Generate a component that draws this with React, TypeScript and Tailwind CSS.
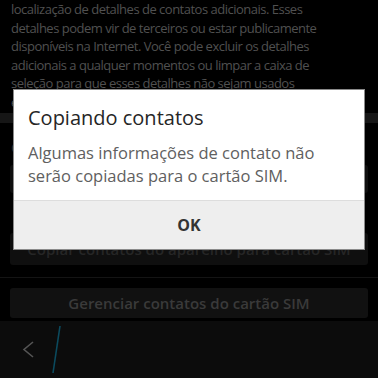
const FONT = { fontFamily: '"Open Sans", "Noto Sans", sans-serif' };

const LINES = [
  'localização de detalhes de contatos adicionais. Esses',
  'detalhes podem vir de terceiros ou estar publicamente',
  'disponíveis na Internet. Você pode excluir os detalhes',
  'adicionais a qualquer momentos ou limpar a caixa de',
  'seleção para que esses detalhes não sejam usados',
  'em seus contatos.',
];

const BackBar = () => (
  <div className="h-[57px] bg-[#0c0c0c] flex items-center">
    <svg width="70" height="57" viewBox="0 0 70 57">
      <path d="M33 21 L24 28.5 L33 36" fill="none" stroke="#555" strokeWidth="1.6" />
      <path d="M60 5 L53 52" stroke="#0b4a5e" strokeWidth="1.6" />
    </svg>
  </div>
);

export default function App() {
  return (
    <div className="relative w-[378px] h-[378px] overflow-hidden bg-black" style={FONT}>
      <div className="flex flex-col h-full">
        <div className="h-[119px] px-[11px] text-[13px] leading-[18.5px] tracking-[-0.5px] text-[#505050] overflow-hidden">
          {LINES.map((l) => (
            <div key={l} className="whitespace-nowrap">
              {l}
            </div>
          ))}
        </div>
        <div className="h-[10px] bg-[#161616] shrink-0" />
        <div className="px-[11px] pt-[14px] text-[15px] leading-[20px] text-[#2e2e2e]">Cartão SIM</div>
        <div className="mx-[10px] mt-[8px] h-[30px] rounded-[3px] bg-[#0f0f0f]" />
        <div className="mx-[10px] mt-[40px] h-[33px] rounded-[3px] bg-[#0f0f0f] flex items-center justify-center text-[15px] font-semibold text-[#262626]">
          Copiar contatos do aparelho para cartão SIM
        </div>
        <div className="mt-[12px] h-px bg-[#141414]" />
        <div className="mx-[10px] mt-[10px] h-[32px] rounded-[3px] bg-[#111111] flex items-center justify-center text-[15px] font-semibold text-[#3a3a3a]">
          Gerenciar contatos do cartão SIM
        </div>
        <div className="mt-[3px]">
          <BackBar />
        </div>
      </div>

      <div className="absolute left-[13px] top-[89px] w-[352px] h-[161px] bg-white border border-[#8a8a8a] flex flex-col">
        <div className="px-[14px] pt-[16px] text-[20px] leading-[24px] text-[#262626]">Copiando contatos</div>
        <div className="px-[14px] pt-[11px] text-[16.5px] leading-[23px] text-[#606060]">
          Algumas informações de contato não serão copiadas para o cartão SIM.
        </div>
        <div className="mt-auto h-[49px] bg-[#eeeeee] border-t border-[#dddddd] flex items-center justify-center text-[16px] font-bold text-[#333333]">
          OK
        </div>
      </div>
    </div>
  );
}
